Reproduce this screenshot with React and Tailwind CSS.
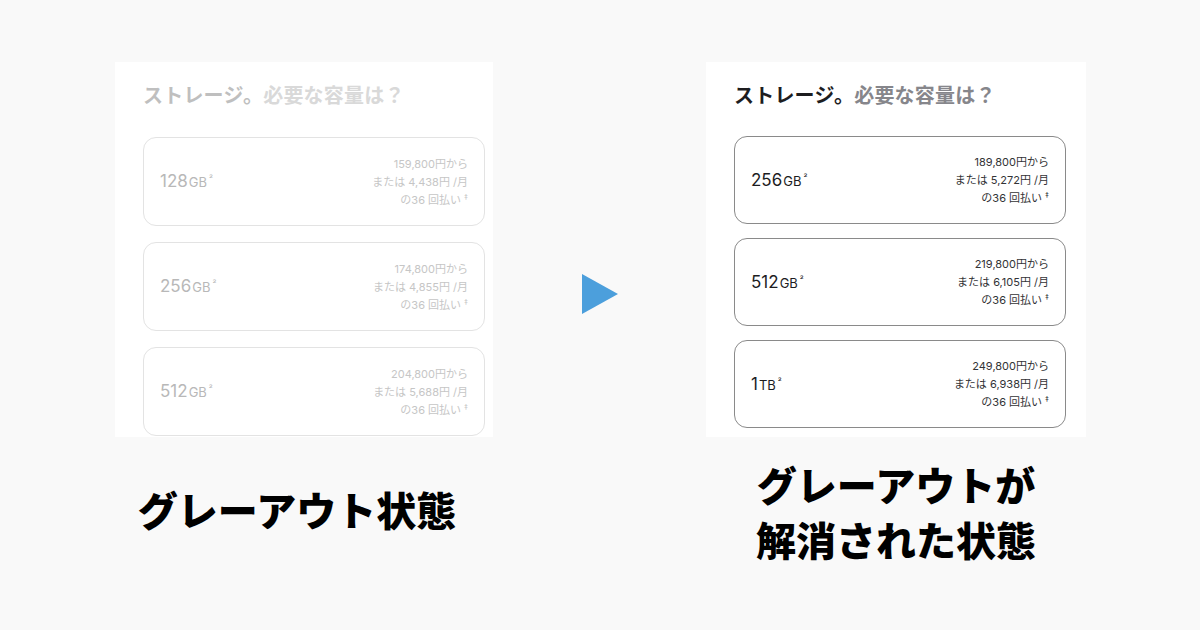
import React from 'react';

const jp = { fontFamily: '"Noto Sans CJK JP", "Noto Sans", sans-serif' };
const latin = { fontFamily: 'Inter, "Noto Sans CJK JP", sans-serif' };

const before = [
  { size: '128', unit: 'GB', price: '159,800', monthly: '4,438' },
  { size: '256', unit: 'GB', price: '174,800', monthly: '4,855' },
  { size: '512', unit: 'GB', price: '204,800', monthly: '5,688' },
];

const after = [
  { size: '256', unit: 'GB', price: '189,800', monthly: '5,272' },
  { size: '512', unit: 'GB', price: '219,800', monthly: '6,105' },
  { size: '1', unit: 'TB', price: '249,800', monthly: '6,938' },
];

// ストレージ選択カード
const StorageCard = ({ item, muted }) => (
  <div
    className={`flex items-center justify-between rounded-[13px] border px-4 ${
      muted ? 'h-[89px] border-[#e3e3e3]' : 'h-[88px] border-[#8a8a8a]'
    }`}
    style={latin}
  >
    <div className={`flex items-start ${muted ? 'text-[#b8b8b8]' : 'text-[#1d1d1f]'}`}>
      <span className="text-[17px] leading-none">{item.size}</span>
      <span className="text-[13px] leading-none mt-[3px] ml-[1px]">{item.unit}</span>
      <span className="text-[9px] leading-none ml-[2px] mt-[1px]">²</span>
    </div>
    <div
      className={`text-right text-[11px] leading-[18px] ${
        muted ? 'text-[#c6c6c6]' : 'text-[#333336]'
      }`}
    >
      <div>{item.price}円から</div>
      <div>または {item.monthly}円 /月</div>
      <div>
        の36 回払い<sup className="text-[8px] ml-[3px]">‡</sup>
      </div>
    </div>
  </div>
);

const Panel = ({ items, muted }) => (
  <div className="bg-white h-[375px] overflow-hidden pl-[28px] pt-[19px]">
    <h2 className="text-[20px] leading-[28px] font-bold tracking-[0.2px]">
      <span className={muted ? 'text-[#bfbfbf]' : 'text-[#1d1d1f]'}>ストレージ。</span>
      <span className={muted ? 'text-[#d9d9d9]' : 'text-[#86868b]'}>必要な容量は？</span>
    </h2>
    <div
      className={`flex flex-col ${
        muted ? 'mt-[28px] gap-[16px] pr-[8px]' : 'mt-[27px] gap-[14px] pr-[20px]'
      }`}
    >
      {items.map((item) => (
        <StorageCard key={item.size + item.unit} item={item} muted={muted} />
      ))}
    </div>
  </div>
);

export default function App() {
  return (
    <div className="w-[1200px] h-[630px] bg-[#f9f9f9] overflow-hidden" style={jp}>
      <div className="flex pl-[115px] pt-[62px]">
        {/* 左: グレーアウト */}
        <div className="w-[378px] flex flex-col">
          <Panel items={before} muted />
          <p className="mt-[45px] text-center text-[40px] leading-[55px] font-black text-black pr-[14px]">
            グレーアウト状態
          </p>
        </div>

        {/* 矢印 */}
        <div className="w-[213px] flex justify-center pt-[212px]">
          <svg width="36" height="40" viewBox="0 0 36 40">
            <polygon points="0,0 36,20 0,40" fill="#4c9fdc" />
          </svg>
        </div>

        {/* 右: 解消後 */}
        <div className="w-[380px] flex flex-col">
          <Panel items={after} />
          <p className="mt-[20px] text-center text-[40px] leading-[55px] font-black text-black">
            グレーアウトが
            <br />
            解消された状態
          </p>
        </div>
      </div>
    </div>
  );
}
